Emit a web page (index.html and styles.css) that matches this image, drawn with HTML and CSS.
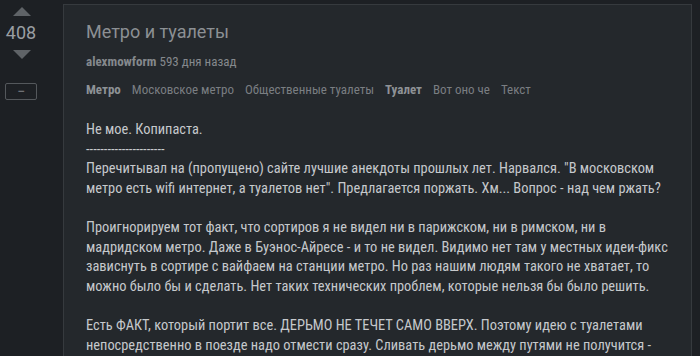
FILE: index.html
```html
<!DOCTYPE html>
<html lang="ru">

<head>
    <meta charset="UTF-8">
    <meta name="viewport" content="width=device-width, initial-scale=1.0">
    <title>Метро и туалеты</title>
    <link rel="stylesheet" href="styles.css">
</head>

<body>
    <div class="story">
        <div class="vote">
            <button class="vote-arrow vote-up" aria-label="плюс"></button>
            <div class="vote-count">408</div>
            <button class="vote-arrow vote-down" aria-label="минус"></button>
            <button class="vote-hide" aria-label="скрыть">&minus;</button>
        </div>
        <div class="story-card">
            <h1 class="story-title">Метро и туалеты</h1>
            <div class="story-meta">
                <span class="story-author">alexmowform</span> 593 дня назад
            </div>
            <div class="story-tags">
                <a class="tag tag-main">Метро</a>
                <a class="tag">Московское метро</a>
                <a class="tag">Общественные туалеты</a>
                <a class="tag tag-main">Туалет</a>
                <a class="tag">Вот оно че</a>
                <a class="tag">Текст</a>
            </div>
            <div class="story-text">
                Не мое. Копипаста.<br>
                ----------------------<br>
                Перечитывал на (пропущено) сайте лучшие анекдоты прошлых лет. Нарвался. "В московском метро есть wifi интернет, а туалетов нет". Предлагается поржать. Хм... Вопрос - над чем ржать?<br>
                <br>
                Проигнорируем тот факт, что сортиров я не видел ни в парижском, ни в римском, ни в мадридском метро. Даже в Буэнос-Айресе - и то не видел. Видимо нет там у местных идеи-фикс зависнуть в сортире с вайфаем на станции метро. Но раз нашим людям такого не хватает, то можно было бы и сделать. Нет таких технических проблем, которые нельзя бы было решить.<br>
                <br>
                Есть ФАКТ, который портит все. ДЕРЬМО НЕ ТЕЧЕТ САМО ВВЕРХ. Поэтому идею с туалетами непосредственно в поезде надо отмести сразу. Сливать дерьмо между путями не получится - контактный рельс рядом.
            </div>
        </div>
    </div>
</body>

</html>
```

FILE: styles.css
```css
body {
    margin: 0;
    background-color: #1d2024;
    font-family: Roboto, "Noto Sans", sans-serif;
    overflow: hidden;
}

.story {
    display: flex;
    align-items: flex-start;
    padding: 4px 8px 0 5px;
    height: 352px;
}

/* колонка рейтинга */
.vote {
    width: 32px;
    flex: 0 0 auto;
    display: flex;
    flex-direction: column;
    align-items: center;
    padding-top: 3px;
}

.vote-arrow {
    width: 0;
    height: 0;
    padding: 0;
    border: 0;
    background: none;
    border-left: 9px solid transparent;
    border-right: 9px solid transparent;
    margin-left: 2px;
}

.vote-up {
    border-bottom: 9px solid #5f6367;
}

.vote-down {
    border-top: 9px solid #5f6367;
}

.vote-count {
    font-size: 18px;
    line-height: 22px;
    color: #9a9ea2;
    margin: 6px 0 6px;
}

.vote-hide {
    width: 32px;
    height: 17px;
    margin-top: 24px;
    padding: 0;
    border: 1px solid #54585c;
    border-radius: 2px;
    background: none;
    color: #8e9296;
    font-size: 12px;
    line-height: 13px;
}

/* карточка поста */
.story-card {
    flex: 1;
    margin-left: 26px;
    height: 100%;
    background-color: #24282c;
    border: 1px solid #363a3e;
    border-bottom: 0;
    padding: 0 22px;
}

.story-title {
    font-size: 18px;
    font-weight: 400;
    line-height: 24px;
    color: #8c9094;
    margin: 15px 0 0;
}

.story-meta,
.story-tags,
.story-text {
    font-family: "Roboto Condensed", "Liberation Sans Narrow", "DejaVu Sans Condensed", Roboto, sans-serif;
}

.story-meta {
    font-size: 13px;
    line-height: 18px;
    color: #85898d;
    margin-top: 9px;
}

.story-author {
    font-weight: 700;
}

.story-tags {
    display: flex;
    gap: 11px;
    margin-top: 10px;
    font-size: 13px;
    line-height: 18px;
}

.tag {
    color: #7a7e82;
}

.tag-main {
    font-weight: 700;
    color: #8e9296;
}

.story-text {
    margin-top: 21px;
    font-size: 14.4px;
    line-height: 19.6px;
    color: #c6c9cc;
}
```
